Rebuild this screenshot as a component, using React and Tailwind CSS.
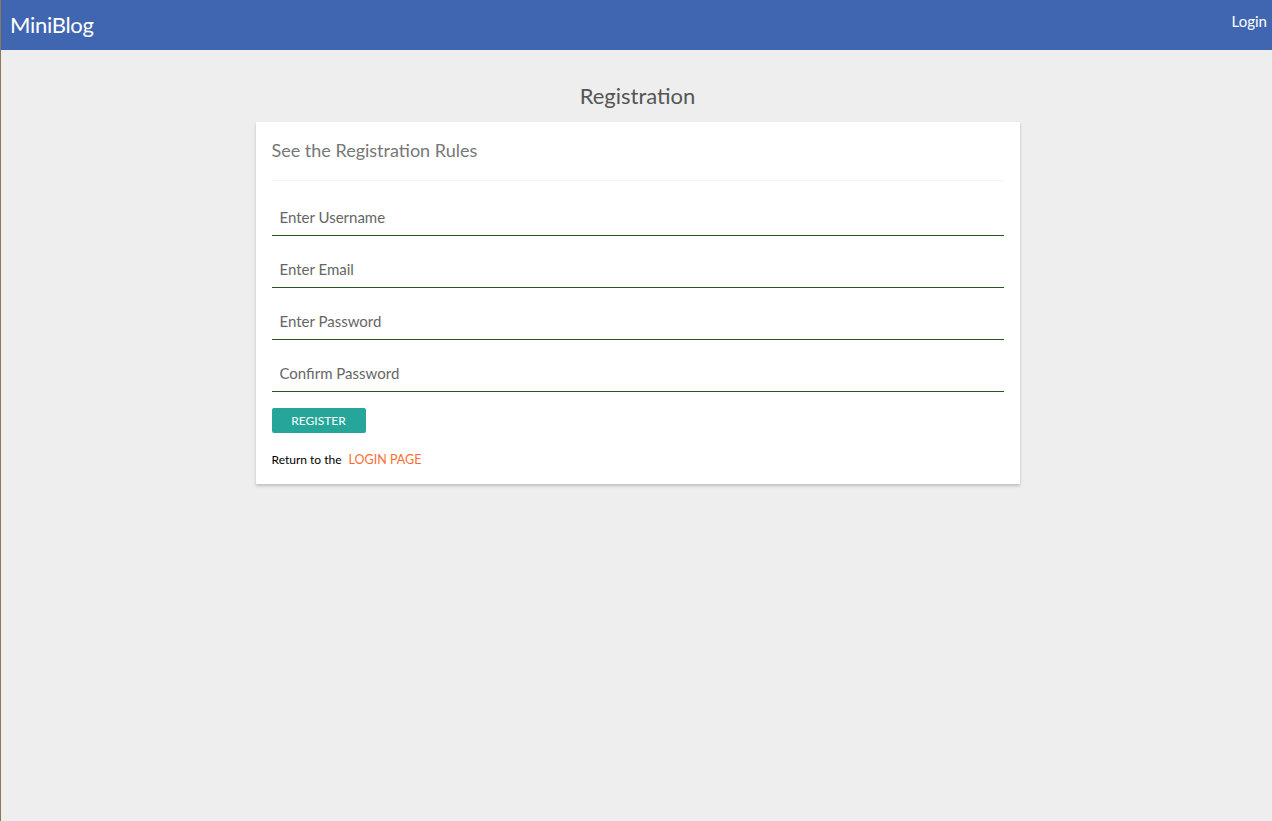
import React from 'react';

const font = { fontFamily: '"Lato", "Open Sans", sans-serif' };

function Field({ placeholder, type = 'text' }) {
  return (
    <div className="h-[52px] flex items-end">
      <input
        type={type}
        placeholder={placeholder}
        className="w-full h-[34px] px-2 pb-[4px] border-b border-[#2a5522] bg-transparent outline-none text-[15px] text-[#444] placeholder:text-[#666]"
        style={font}
      />
    </div>
  );
}

export default function App() {
  return (
    <div className="min-h-[821px] bg-[#eeeeee] border-l border-[#8a7a5c]" style={font}>
      {/* Navbar */}
      <div className="h-[50px] bg-[#4166b1] flex items-center justify-between pl-[9px] pr-[5px]">
        <span className="text-white text-[22px] leading-none tracking-[-0.3px]">MiniBlog</span>
        <span className="text-white text-[15px] leading-none -mt-[7px]">Login</span>
      </div>

      <div className="flex flex-col items-center pl-[2px]">
        <h1 className="text-[22px] text-[#555] mt-[33px] leading-[26px] h-[39px]">Registration</h1>

        <div className="w-[764px] bg-white shadow-[0_2px_3px_rgba(0,0,0,0.2)] px-4 pb-[16px]">
          <div className="pt-[17px] pb-[17px] border-b border-[#f2f2f2]">
            <span className="text-[18px] text-[#777] leading-[22px]">See the Registration Rules</span>
          </div>

          <div className="pt-[3px]">
            <Field placeholder="Enter Username" />
            <Field placeholder="Enter Email" type="email" />
            <Field placeholder="Enter Password" type="password" />
            <Field placeholder="Confirm Password" type="password" />
          </div>

          <button className="mt-[16px] w-[94px] h-[25px] bg-[#26a69a] rounded-[2px] text-white text-[12px] uppercase leading-none">
            Register
          </button>

          <div className="mt-[19px] text-[12px] leading-[16px]">
            <span className="text-black">Return to the </span>
            <a href="#" className="ml-[4px] text-[#ff6d2e] text-[12.5px] uppercase">Login Page</a>
          </div>
        </div>
      </div>
    </div>
  );
}
